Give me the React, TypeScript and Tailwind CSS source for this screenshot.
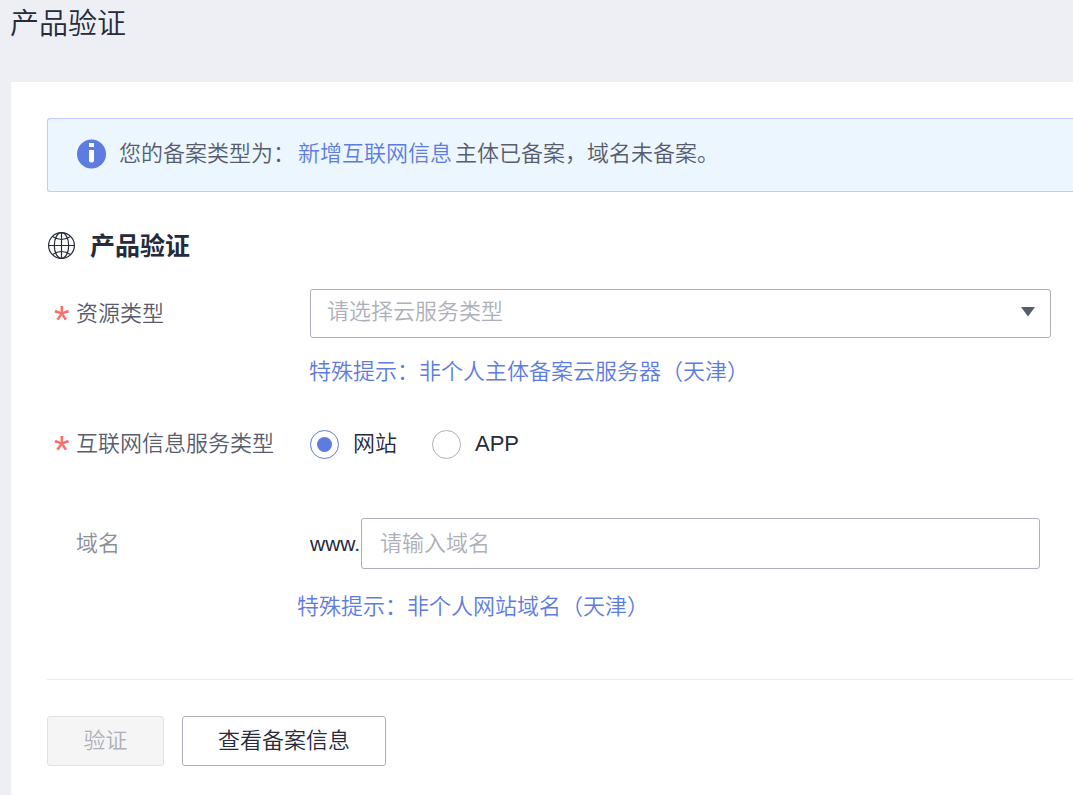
import { useState, type ReactNode } from "react";

function InfoIcon() {
  return (
    <svg viewBox="0 0 30 30" className="size-[30px] shrink-0" aria-hidden="true">
      <circle cx="15.5" cy="15" r="14.5" fill="#5e7ce0" />
      <rect x="13" y="4" width="5" height="4" fill="#fff" />
      <path d="M13 11h5v10.5q0 2-2 2h-1q-2 0-2-2z" fill="#fff" />
    </svg>
  );
}

function GlobeIcon() {
  return (
    <svg
      viewBox="0 0 28 28"
      className="size-[28px] shrink-0"
      fill="none"
      stroke="#252b3a"
      strokeWidth="1.2"
      aria-hidden="true"
    >
      <circle cx="14.5" cy="13.5" r="12.9" />
      <ellipse cx="14.5" cy="13.5" rx="7.2" ry="12.9" />
      <path d="M14.5 .5v26M1.5 13.5h26" />
      <path d="M5.5 4.5q9 6 18 0M5.5 22.5q9-6 18 0" />
    </svg>
  );
}

function FieldLabel({
  htmlFor,
  id,
  required,
  muted,
  children,
}: {
  htmlFor?: string;
  id?: string;
  required?: boolean;
  muted?: boolean;
  children: ReactNode;
}) {
  return (
    <div className="flex w-[263px] shrink-0 items-center pl-[7px]">
      <span
        className="h-6 w-[22px] font-['Liberation_Sans'] text-[40px] leading-9 font-normal text-[#f66f6a]"
        aria-hidden="true"
      >
        {required ? "*" : ""}
      </span>
      <label
        htmlFor={htmlFor}
        id={id}
        className={muted ? "whitespace-nowrap text-[#8a8e99]" : "whitespace-nowrap text-[#575d6c]"}
      >
        {children}
      </label>
    </div>
  );
}

const serviceTypes = [
  { value: "site", label: "网站" },
  { value: "app", label: "APP" },
];

export default function App() {
  const [service, setService] = useState("site");

  return (
    <div className="flex min-h-screen flex-col overflow-x-hidden bg-[#eeeff5] font-['Liberation_Sans','Noto_Sans_CJK_SC',sans-serif] text-[22px] leading-8 font-[350] text-[#252b3a]">
      <header className="h-[82px] px-[10px] pt-1">
        <h1 className="text-[29px] leading-10">产品验证</h1>
      </header>

      <main className="ml-[11px] flex-1 bg-white pt-9 pb-7 pl-9">
        <div className="flex h-[74px] items-center rounded-l-[3px] border border-r-0 border-[#beccfa] bg-[#ebf6ff] pb-[2px] pl-7 text-[#575d6c]">
          <InfoIcon />
          <p className="ml-[13px]">
            您的备案类型为：<a href="#type" className="mx-[3px] text-[#5e7ce0]">新增互联网信息</a>主体已备案，域名未备案。
          </p>
        </div>

        <h2 className="mt-9 flex items-center gap-[15px] text-[25px] leading-9 font-bold">
          <GlobeIcon />
          产品验证
        </h2>

        <form onSubmit={(e) => e.preventDefault()}>
          <div className="mt-[25px] mr-[22px] flex items-center">
            <FieldLabel htmlFor="resource" required>
              资源类型
            </FieldLabel>
            <div className="relative min-w-0 flex-1">
              <select
                id="resource"
                defaultValue=""
                className="h-[49px] w-full appearance-none rounded-[3px] border border-[#adb0b8] bg-white pr-12 pb-1 pl-4 text-[#adb0b8]"
              >
                <option value="">请选择云服务类型</option>
              </select>
              <svg
                viewBox="0 0 14 10"
                className="pointer-events-none absolute top-[18px] right-[16px] h-[10px] w-[14px]"
                aria-hidden="true"
              >
                <path d="M0 0h14L7 9.5z" fill="#575d6c" />
              </svg>
            </div>
          </div>
          <p className="mt-[18px] ml-[262px] text-[#5e7ce0]">特殊提示：非个人主体备案云服务器（天津）</p>

          <div className="mt-10 flex items-center" role="radiogroup" aria-labelledby="service">
            <FieldLabel id="service" required>
              互联网信息服务类型
            </FieldLabel>
            <div className="flex gap-[35px]">
              {serviceTypes.map((t) => (
                <label key={t.value} className="flex items-center gap-[14px]">
                  <input
                    type="radio"
                    name="service"
                    checked={service === t.value}
                    onChange={() => setService(t.value)}
                    className="grid size-[29px] appearance-none place-items-center rounded-full border border-[#adb0b8] bg-white checked:border-[#5e7ce0] checked:before:size-[15px] checked:before:rounded-full checked:before:bg-[#5e7ce0]"
                  />
                  {t.label}
                </label>
              ))}
            </div>
          </div>

          <div className="mt-[58px] mr-[33px] flex items-center">
            <FieldLabel htmlFor="domain" muted>
              域名
            </FieldLabel>
            <span className="w-[51px] shrink-0 text-[21px]">www.</span>
            <input
              id="domain"
              type="text"
              placeholder="请输入域名"
              className="h-[51px] min-w-0 flex-1 rounded-[3px] border border-[#adb0b8] px-[18px] placeholder:text-[#adb0b8]"
            />
          </div>
          <p className="mt-[22px] ml-[250px] text-[#5e7ce0]">特殊提示：非个人网站域名（天津）</p>

          <div className="mt-14 flex gap-[18px] border-t border-[#ebebef] pt-9">
            <button
              type="submit"
              disabled
              className="h-[50px] w-[117px] rounded-[3px] border border-[#dfe1e6] bg-[#f5f5f6] text-[#adb0b8]"
            >
              验证
            </button>
            <button type="button" className="h-[50px] w-[204px] rounded-[3px] border border-[#adb0b8] bg-white">
              查看备案信息
            </button>
          </div>
        </form>
      </main>
    </div>
  );
}
